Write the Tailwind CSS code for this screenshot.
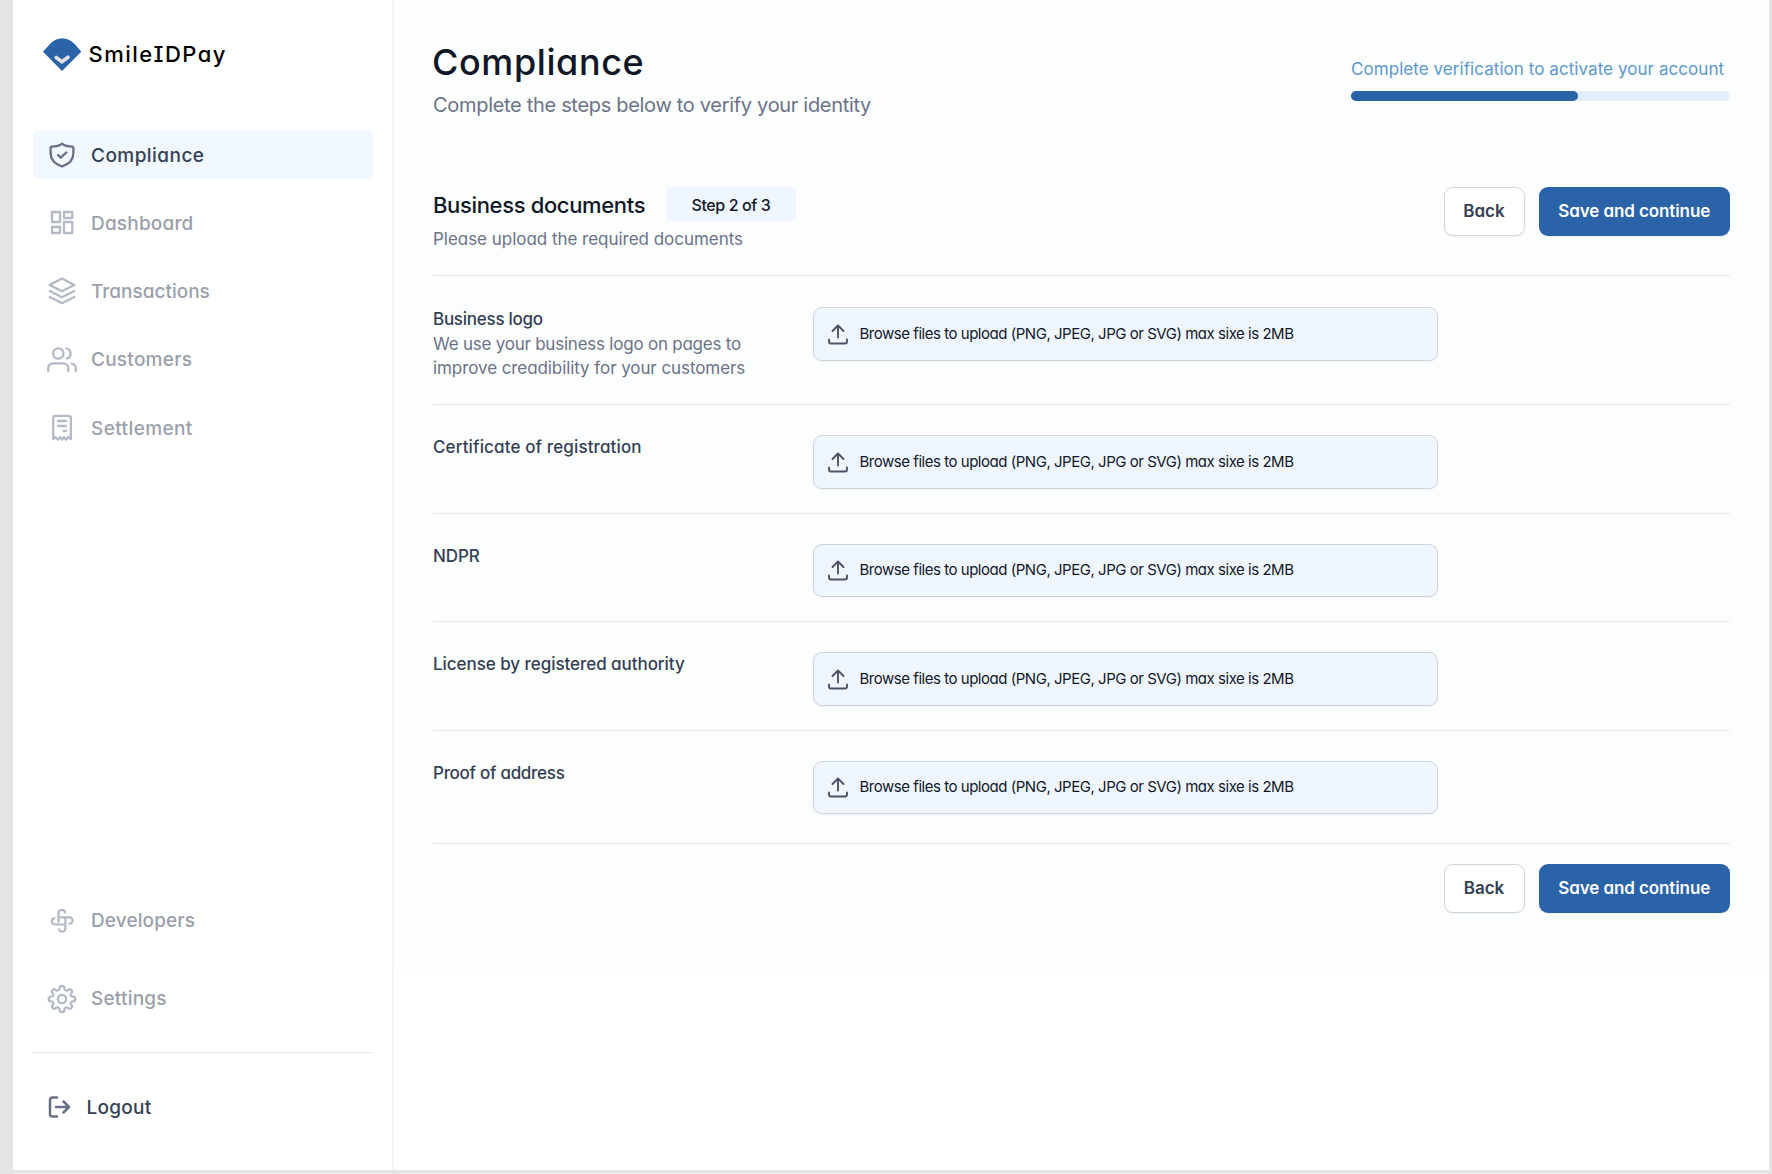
<!DOCTYPE html>
<html lang="en">
<head>
<meta charset="utf-8">
<title>SmileIDPay – Compliance</title>
<script src="https://cdn.jsdelivr.net/npm/@tailwindcss/browser@4"></script>
</head>
<body class="h-[1174px] w-[1772px] overflow-hidden bg-[#e4e4e4] pl-[13px] pr-[3px] pb-1 font-['Inter',sans-serif] [font-feature-settings:'cv11']">
<div class="flex h-full bg-white">
  <aside class="flex w-[381px] shrink-0 flex-col border-r-2 border-[#f3f4f6] pl-5 pr-[19px] font-medium text-[#9a9fab]">
    <div class="flex h-[130px] items-start gap-2 pl-[9.500px] pt-[38px]">
      <svg class="h-[33px] w-[38px] shrink-0" viewBox="0 0 38 33"><path d="M0 13.7 6.5 6.5C14 -2 24.500 -2 32 6.500L38.300 13.700 19 33Z" fill="#2a63a7"/><path d="M13.200 19.500 18.900 23.700 25 19.200" fill="none" stroke="#e3e1e3" stroke-width="3.600" stroke-linecap="round"/></svg>
      <span class="mt-[3px] text-[22px] leading-[26px] tracking-[1.45px] text-black [font-feature-settings:'cv11','cv08']">SmileIDPay</span>
    </div>
    <nav class="flex flex-col gap-[19.8px] text-[19px]">
      <a class="flex h-[48.5px] items-center gap-[14px] rounded-md bg-[#f2f8ff] pl-[14px] pt-px text-[#344054]">
        <svg class="size-[30px]" viewBox="0 0 30 30" fill="none" stroke="#667085" stroke-width="2.3" stroke-linecap="round" stroke-linejoin="round"><path d="M15 3.600C12.500 5.700 9 6.600 4.600 6.700 3.300 6.700 3.600 8 3.600 9.500V13C3.600 20 9 24.500 15 26.500 21 24.500 26.400 20 26.400 13V9.500C26.400 8 26.700 6.700 25.400 6.700 21 6.600 17.500 5.700 15 3.600Z"/><path d="m11 15 2.700 2.700 5.600-5.200"/></svg>
        <span class="pt-[2px] tracking-[0.45px]">Compliance</span></a>
      <a class="flex h-[48.5px] items-center gap-[14px] pl-[14px] pt-px">
        <svg class="size-[30px]" viewBox="0 0 30 30" fill="none" stroke="#b4b9c6" stroke-width="2.3" stroke-linejoin="round"><path d="M5 4h8v10H5zM17 4h8.300v6H17zM5 19h8v6H5zM17 14h8.300v11H17z"/></svg>
        <span class="pt-[2px] tracking-[0.19px]">Dashboard</span></a>
      <a class="flex h-[48.5px] items-center gap-[14px] pl-[14px] pt-px">
        <svg class="size-[30px]" viewBox="0 0 30 30" fill="none" stroke="#b4b9c6" stroke-width="2.3" stroke-linecap="round" stroke-linejoin="round"><path d="M15 2.500 27.300 9 15 15.200 2.700 9ZM2.700 15 15 21.200 27.300 15M2.700 21 15 27.300 27.300 21"/></svg>
        <span class="pt-[2px]">Transactions</span></a>
      <a class="flex h-[48.5px] items-center gap-[14px] pl-[14px] pt-px">
        <svg class="size-[30px]" viewBox="0 0 30 30" fill="none" stroke="#b4b9c6" stroke-width="2.3" stroke-linecap="round" stroke-linejoin="round"><circle cx="11.300" cy="8.500" r="5.200"/><path d="M1.200 26.300V23.500C1.200 20.400 3.300 18.300 6.200 18.300H16.400C19.300 18.300 21.300 20.400 21.300 23.500V26.300M19.800 3.500A5.200 5.200 0 0 1 19.800 13.500M24.600 18.600A5 5 0 0 1 28.800 23.500V26.300"/></svg>
        <span class="pt-[2px] tracking-[0.25px]">Customers</span></a>
      <a class="flex h-[48.5px] items-center gap-[14px] pl-[14px] pt-[2px]">
        <svg class="size-[30px]" viewBox="0 0 30 30" fill="none" stroke="#b4b9c6" stroke-width="2.3" stroke-linecap="round" stroke-linejoin="round"><path d="M6.200 26V5Q6.200 2.800 8.500 2.800H21.500Q23.900 2.800 23.900 5V26L21.500 24.200 19 26.600 17 24.200 15 26.600 13 24.200 11 26.600 8.600 24.200ZM11 8H19M11 13H19M16.500 18H19"/></svg>
        <span class="pt-[2px] tracking-[0.4px]">Settlement</span></a>
    </nav>
    <div class="mt-auto flex flex-col gap-[30px] text-[19px]">
      <a class="flex h-12 items-center gap-[14px] pl-[14px]">
        <svg class="size-[30px]" viewBox="0 0 30 30" fill="none" stroke="#b4b9c6" stroke-width="2.2" stroke-linecap="round" stroke-linejoin="round"><path d="M11.500 16V7.500A3.300 3.300 0 0 1 18 6.500M11.500 11.300H22.500A3.200 3.200 0 0 1 22.500 17.700M18.400 13V22.500A3.300 3.300 0 0 1 12 23.500M18.400 18.500H7.500A3.200 3.200 0 0 1 7.500 12.200"/></svg>
        <span class="pt-px tracking-[0.11px]">Developers</span></a>
      <a class="flex h-12 items-center gap-[14px] pl-[14px]">
        <svg class="size-[30px]" viewBox="0 0 30 30" fill="none" stroke="#b4b9c6" stroke-width="2.3" stroke-linecap="round" stroke-linejoin="round"><circle cx="15" cy="15" r="4.200"/><path d="M12.600 4.200A2.400 2.400 0 0 1 17.400 4.200C17.400 6.500 19.800 7.500 21.400 5.700A2.300 2.300 0 0 1 24.600 8.900C22.700 10.400 23.600 12.600 25.900 12.600A2.400 2.400 0 0 1 25.900 17.400C23.600 17.400 22.700 19.600 24.600 21.100A2.300 2.300 0 0 1 21.400 24.300C19.800 22.500 17.400 23.500 17.400 25.800A2.400 2.400 0 0 1 12.600 25.800C12.600 23.500 10.200 22.500 8.600 24.300A2.300 2.300 0 0 1 5.400 21.100C7.300 19.600 6.400 17.400 4.100 17.400A2.400 2.400 0 0 1 4.100 12.600C6.400 12.600 7.300 10.400 5.400 8.900A2.300 2.300 0 0 1 8.600 5.700C10.200 7.500 12.600 6.500 12.600 4.200Z"/></svg>
        <span class="pt-px tracking-[0.2px]">Settings</span></a>
    </div>
    <div class="mt-[29px] flex h-[118px] items-start gap-[15px] border-t border-[#e6e8ec] pl-[14px] pt-10 text-[19px] text-[#344054]">
      <svg class="h-[28px] w-[25px]" viewBox="0 0 25 28" fill="none" stroke="#667085" stroke-width="2.500" stroke-linecap="round" stroke-linejoin="round"><path d="M10 4.500H5.500Q3 4.500 3 7V21Q3 23.500 5.500 23.500H10M9 14H22M16.500 8.500 22 14 16.500 19.500"/></svg>
      <span class="-ml-[0.5px] leading-[29px] tracking-[0.25px]">Logout</span>
    </div>
  </aside>

  <main class="flex-1">
    <div class="h-[971px] bg-[#fcfdfd] pl-[39px] pr-[39px] pt-10">
      <header class="flex h-[147px] justify-between">
        <div>
          <h1 class="-ml-px text-[36px] font-medium leading-[44px] tracking-[0.6px] text-[#101828]">Compliance</h1>
          <p class="mt-[7px] text-[20px] leading-[28px] tracking-[-0.31px] text-[#6b7389]">Complete the steps below to verify your identity</p>
        </div>
        <div class="w-[379px] pt-4">
          <p class="whitespace-nowrap text-[17px] font-normal leading-[26px] tracking-[0.06px] text-[#5b98cf] [font-feature-settings:normal]">Complete verification to activate your account</p>
          <div class="mt-[9px] h-[10px] rounded-full bg-[#e1effc]"><div class="h-full rounded-full bg-[#2a63a7]" style="width:60%"></div></div>
        </div>
      </header>

      <section class="flex h-[89px] justify-between border-b border-[#e6e8ec]">
        <div>
          <div class="flex items-center gap-[21px]">
            <h2 class="w-[212px] whitespace-nowrap pt-[2px] text-[22px] font-medium leading-[32px] tracking-[-0.35px] text-[#101828]">Business documents</h2>
            <span class="flex h-[34px] w-[130px] items-center justify-center rounded bg-[#f0f6ff] pt-[2px] text-[16px] font-medium tracking-[-0.4px] text-[#101828]">Step 2 of 3</span>
          </div>
          <p class="mt-[5px] text-[17px] leading-[26px] tracking-[-0.03px] text-[#6b7389]">Please upload the required documents</p>
        </div>
        <div class="flex gap-[14px]">
          <button class="h-[49px] w-[81px] rounded-[9px] border border-[#d0d5dd] bg-white text-[17px] font-semibold text-[#344054] shadow-xs">Back</button>
          <button class="h-[49px] w-[191.5px] whitespace-nowrap rounded-[9px] bg-[#2a63a7] text-[17px] font-semibold tracking-[-0.1px] text-white shadow-xs">Save and continue</button>
        </div>
      </section>

      <section id="rows" class="font-medium text-[17px] leading-[24.500px] text-[#344054]"></section>

      <div class="mt-5 flex justify-end gap-[14px]">
        <button class="h-[49px] w-[81px] rounded-[9px] border border-[#d0d5dd] bg-white text-[17px] font-semibold text-[#344054] shadow-xs [font-feature-settings:normal]">Back</button>
        <button class="h-[49px] w-[191.5px] whitespace-nowrap rounded-[9px] bg-[#2a63a7] text-[17px] font-semibold tracking-[-0.1px] text-white shadow-xs">Save and continue</button>
      </div>
    </div>
  </main>
</div>
<script>
  const rows = [
    { title: 'Business logo', height: 129, tracking: 'tracking-[-0.26px]', note: true },
    { title: 'Certificate of registration', height: 108.5, tracking: 'tracking-[0.13px]' },
    { title: 'NDPR', height: 108.5, tracking: 'tracking-[-0.1px]' },
    { title: 'License by registered authority', height: 108.5, tracking: 'tracking-[-0.05px]' },
    { title: 'Proof of address', height: 113.5, tracking: 'tracking-[-0.28px]' },
  ];
  const note = `<p class="whitespace-nowrap font-normal text-[#6b7389]">
    <span class="block tracking-[-0.23px]">We use your business logo on pages to</span>
    <span class="block tracking-[-0.08px]">improve creadibility for your customers</span></p>`;
  document.getElementById('rows').innerHTML = rows.map((row, i) => `
    <div class="flex border-b border-[#e6e8ec] ${i ? 'pt-[30px]' : 'pt-[31px]'}" style="height:${row.height}px">
      <div class="w-[380px] shrink-0">
        <div class="${row.tracking}">${row.title}</div>
        ${row.note ? note : ''}
      </div>
      <div class="flex h-[53.5px] w-[624.5px] items-center rounded-[9px] border border-[#cdd4df] bg-[#f0f6ff] pl-[13.5px] text-[15px] font-normal tracking-[-0.47px] text-[#101828] shadow-xs">
        <svg class="mr-[12px] h-[22px] w-[20px]" viewBox="0 0 20 22" fill="none" stroke="#475467" stroke-width="1.900" stroke-linecap="round" stroke-linejoin="round"><path d="M10 14.500V2.500M4.500 8 10 2.500 15.500 8M1 16.500V18.500Q1 20.500 3 20.500H17Q19 20.500 19 18.500V16.500"/></svg>
        <span>Browse files to upload (PNG, JPEG, JPG or SVG) max sixe is 2MB</span>
      </div>
    </div>`).join('');
</script>
</body>
</html>
